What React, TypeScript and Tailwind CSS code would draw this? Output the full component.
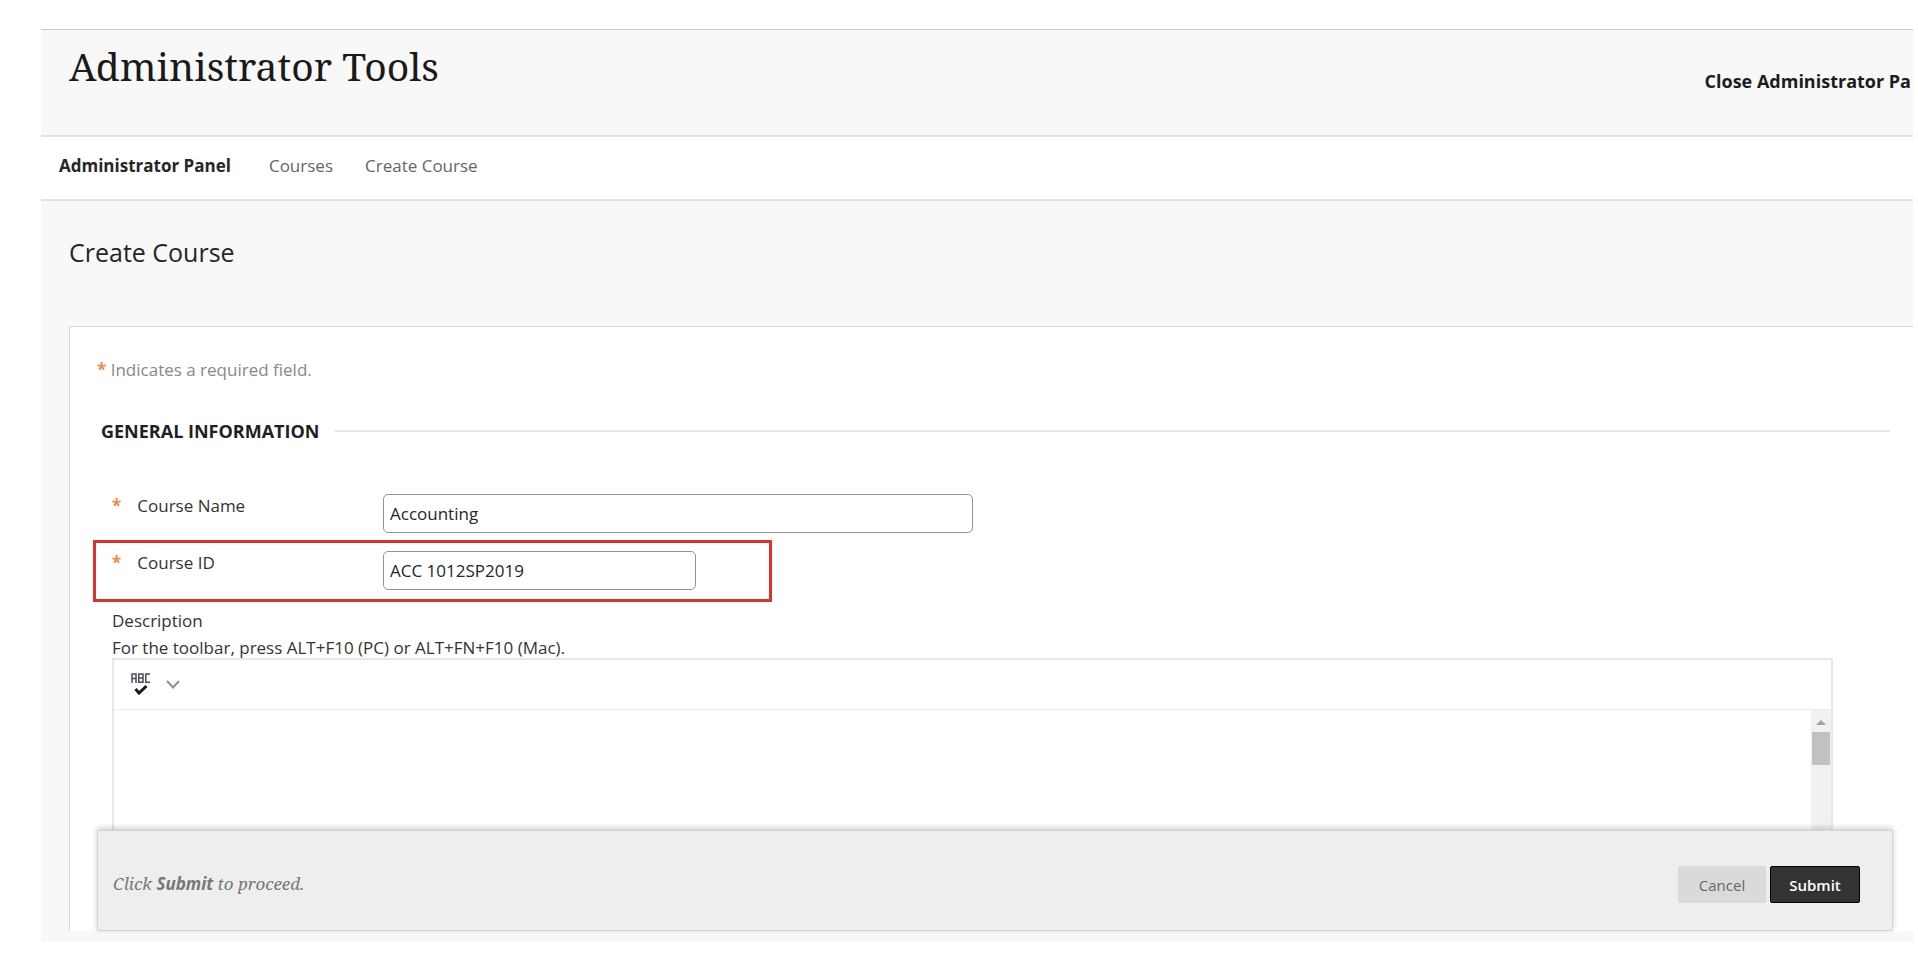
import { useState } from "react";

const crumbs = [
  { label: "Courses", href: "#courses" },
  { label: "Create Course", href: "#create-course" },
];

const inputClass =
  "h-[39px] rounded-[5px] border border-[#949494] bg-white px-1.5 text-[17px] leading-6 text-[#262626] outline-none";

const Required = () => <span className="font-bold text-[#f58a42]">*</span>;

const SpellCheckIcon = () => (
  <svg width="20" height="22" viewBox="0 0 20 22" fill="none" aria-hidden="true">
    <g stroke="#454b55" strokeWidth="1.5">
      <path d="M1 10V1H5V10M1 5.5H5" />
      <path d="M7.7 1V9.3H12V1H7.7ZM7.7 5H12" />
      <path d="M19 1H14.8V9.3H19" />
    </g>
    <path d="M4.5 16L8 20L15.5 13" stroke="#111827" strokeWidth="3" />
  </svg>
);

const ChevronIcon = () => (
  <svg width="14" height="9" viewBox="0 0 14 9" fill="none" aria-hidden="true">
    <path d="M1 1L7 7.5L13 1" stroke="#8e9196" strokeWidth="2" />
  </svg>
);

const Header = () => (
  <header className="flex h-[106px] items-start justify-between border-t border-[#cccccc] bg-[#f8f8f8] pl-7">
    <h1 className="pt-3 font-['Noto_Serif','DejaVu_Serif_Condensed','DejaVu_Serif',serif] text-[39px] leading-[48px] text-[#1a1a1a]">
      Administrator Tools
    </h1>
    <a href="#close" className="overflow-hidden pt-[39px] pr-0.5 text-lg leading-6 font-bold whitespace-nowrap text-[#1c1c1c]">
      Close Administrator Pa
    </a>
  </header>
);

const Breadcrumbs = () => (
  <nav className="flex h-[66px] items-center border-y-2 border-[#e2e2e2] bg-white pb-1 pl-[18px] text-[17px] leading-6 text-[#666666]">
    <a href="#panel" className="mr-[38px] font-bold text-[#262626]">
      Administrator Panel
    </a>
    {crumbs.map((crumb) => (
      <a key={crumb.label} href={crumb.href} className="mr-8">
        {crumb.label}
      </a>
    ))}
  </nav>
);

const Editor = () => (
  <div className="mr-20 ml-[42px] border-2 border-b-0 border-[#e8e8e8]">
    <div className="flex h-[50px] items-start border-b border-[#eeeeee] pt-[13px] pl-[17px]">
      <button type="button" aria-label="Spell check">
        <SpellCheckIcon />
      </button>
      <button type="button" aria-label="More spell check options" className="mt-[7px] ml-[15px]">
        <ChevronIcon />
      </button>
    </div>
    <div className="flex h-[120px]">
      <textarea aria-labelledby="description-label" className="flex-1 resize-none outline-none" />
      <div className="flex w-5 flex-col items-center bg-[#f1f1f1]">
        <svg width="10" height="5" viewBox="0 0 10 5" className="mt-2.5 mb-[7px]" aria-hidden="true">
          <path d="M0 5L5 0L10 5Z" fill="#a3a3a3" />
        </svg>
        <div className="h-[33px] w-[18px] bg-[#c1c1c1]" />
      </div>
    </div>
  </div>
);

const SubmitBar = () => (
  <footer className="relative mr-5 ml-[27px] flex h-[101px] items-center justify-between border border-[#d4d4d4] bg-[#eeeeee] pr-8 pl-[15px] shadow-[0_-2px_6px_rgba(0,0,0,0.2)]">
    <p className="pt-1.5 font-['Noto_Serif','DejaVu_Serif_Condensed','DejaVu_Serif',serif] text-[17px] leading-6 text-[#777777] italic">
      Click <strong className="font-['Open_Sans',sans-serif] font-bold">Submit</strong> to proceed.
    </p>
    <div className="flex gap-1 pt-2 text-[15px] leading-5">
      <button type="button" className="h-[37px] w-[88px] rounded-[2px] bg-[#dadada] text-[#666666]">
        Cancel
      </button>
      <button type="submit" className="h-[37px] w-[90px] rounded-[2px] border border-black bg-[#333333] font-semibold text-white">
        Submit
      </button>
    </div>
  </footer>
);

export default function App() {
  const [name, setName] = useState("Accounting");
  const [courseId, setCourseId] = useState("ACC 1012SP2019");

  return (
    <div className="bg-white pt-[29px] pr-[5px] pb-[15px] pl-[41px] font-['Open_Sans',sans-serif] text-[#333333]">
      <Header />
      <Breadcrumbs />
      <main className="bg-[#f8f8f8] pb-[11px] pl-7">
        <h2 className="pt-[35px] pb-[58px] text-[25px] leading-8 text-[#262626]">Create Course</h2>
        <form
          className="border-t border-l border-[#d6d6d6] bg-white text-[17px] leading-6"
          onSubmit={(e) => e.preventDefault()}
        >
          <p className="pt-[31px] pl-[27px] text-[#888888]">
            <Required /> Indicates a required field.
          </p>
          <div className="mt-[37px] mr-[23px] ml-[31px] flex items-center gap-4">
            <h3 className="text-lg leading-6 font-bold text-[#1f1f1f]">GENERAL INFORMATION</h3>
            <div className="h-0.5 flex-1 bg-[#e6e6e6]" />
          </div>

          <div className="mt-[51px] flex items-start pl-[42px]">
            <label htmlFor="course-name" className="flex w-[271px] gap-4">
              <Required /> Course Name
            </label>
            <input
              id="course-name"
              className={`${inputClass} w-[590px]`}
              value={name}
              onChange={(e) => setName(e.target.value)}
            />
          </div>
          <div className="mt-[7px] ml-[23px] flex h-[62px] w-[679px] items-start border-[3px] border-[#dc322c] pt-2 pl-4">
            <label htmlFor="course-id" className="flex w-[271px] gap-4">
              <Required /> Course ID
            </label>
            <input
              id="course-id"
              className={`${inputClass} w-[313px]`}
              value={courseId}
              onChange={(e) => setCourseId(e.target.value)}
            />
          </div>

          <div className="mt-[5px] pl-[42px] leading-[27px]">
            <p id="description-label">Description</p>
            <p className="-mb-[3px]">For the toolbar, press ALT+F10 (PC) or ALT+FN+F10 (Mac).</p>
          </div>
          <Editor />
          <SubmitBar />
        </form>
      </main>
    </div>
  );
}
